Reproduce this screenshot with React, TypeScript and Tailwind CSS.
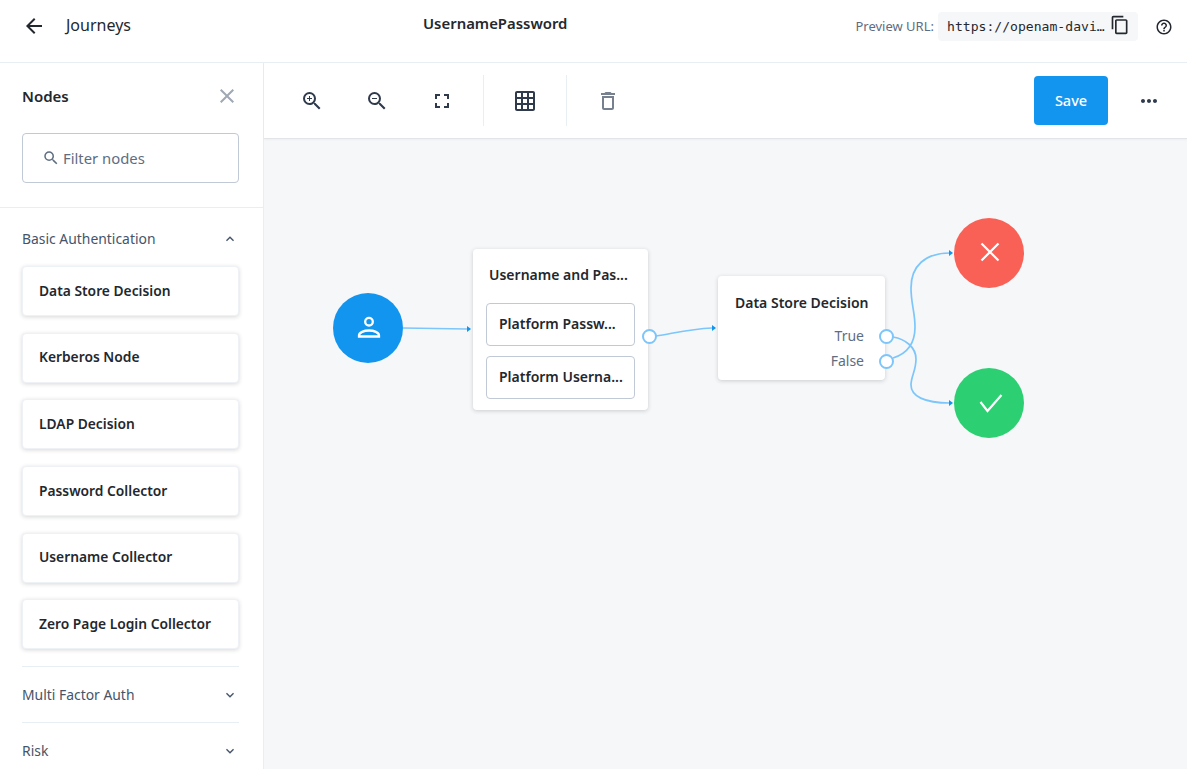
import * as React from "react";

const font = { fontFamily: '"Noto Sans", sans-serif' };

function Icon({ d, className }: { d: string; className?: string }) {
  return (
    <svg viewBox="0 0 24 24" fill="currentColor" className={className}>
      <path d={d} />
    </svg>
  );
}

const searchPath =
  "M15.5 14h-.79l-.28-.27A6.471 6.471 0 0 0 16 9.5 6.5 6.5 0 1 0 9.5 16c1.61 0 3.09-.59 4.23-1.57l.27.28v.79l5 4.99L20.49 19l-4.99-5zm-6 0C7.01 14 5 11.99 5 9.5S7.01 5 9.5 5 14 7.01 14 9.5 11.99 14 9.5 14z";
const paths = {
  back: "M20 11H7.83l5.59-5.59L12 4l-8 8 8 8 1.41-1.41L7.83 13H20v-2z",
  close: "M19 6.41L17.59 5 12 10.59 6.41 5 5 6.41 10.59 12 5 17.59 6.41 19 12 13.41 17.59 19 19 17.59 13.41 12z",
  search: searchPath,
  zoomIn: searchPath + "M12 10h-2v2H9v-2H7V9h2V7h1v2h2v1z",
  zoomOut: searchPath + "M7 9h5v1H7z",
  fullscreen: "M7 14H5v5h5v-2H7v-3zm-2-4h2V7h3V5H5v5zm12 7h-3v2h5v-5h-2v3zM14 5v2h3v3h2V5h-5z",
  grid: "M20 2H4c-1.1 0-2 .9-2 2v16c0 1.1.9 2 2 2h16c1.1 0 2-.9 2-2V4c0-1.1-.9-2-2-2zM8 20H4v-4h4v4zm0-6H4v-4h4v4zm0-6H4V4h4v4zm6 12h-4v-4h4v4zm0-6h-4v-4h4v4zm0-6h-4V4h4v4zm6 12h-4v-4h4v4zm0-6h-4v-4h4v4zm0-6h-4V4h4v4z",
  trash: "M6 19c0 1.1.9 2 2 2h8c1.1 0 2-.9 2-2V7H6v12zM8 9h8v10H8V9zm7.5-5l-1-1h-5l-1 1H5v2h14V4z",
  copy: "M16 1H4c-1.1 0-2 .9-2 2v14h2V3h12V1zm3 4H8c-1.1 0-2 .9-2 2v14c0 1.1.9 2 2 2h11c1.1 0 2-.9 2-2V7c0-1.1-.9-2-2-2zm0 16H8V7h11v14z",
  help: "M11 18h2v-2h-2v2zm1-16C6.48 2 2 6.48 2 12s4.48 10 10 10 10-4.48 10-10S17.52 2 12 2zm0 18c-4.41 0-8-3.59-8-8s3.59-8 8-8 8 3.59 8 8-3.59 8-8 8zm0-14c-2.21 0-4 1.79-4 4h2c0-1.1.9-2 2-2s2 .9 2 2c0 2-3 1.75-3 5h2c0-2.25 3-2.5 3-5 0-2.21-1.79-4-4-4z",
  more: "M6 10c-1.1 0-2 .9-2 2s.9 2 2 2 2-.9 2-2-.9-2-2-2zm12 0c-1.1 0-2 .9-2 2s.9 2 2 2 2-.9 2-2-.9-2-2-2zm-6 0c-1.1 0-2 .9-2 2s.9 2 2 2 2-.9 2-2-.9-2-2-2z",
  less: "M12 8l-6 6 1.41 1.41L12 10.83l4.59 4.58L18 14z",
  expand: "M16.59 8.59L12 13.17 7.41 8.59 6 10l6 6 6-6z",
};

const nodes = [
  "Data Store Decision",
  "Kerberos Node",
  "LDAP Decision",
  "Password Collector",
  "Username Collector",
  "Zero Page Login Collector",
];

function Sidebar() {
  return (
    <aside className="w-[264px] shrink-0 border-r border-[#e7eef4] bg-white flex flex-col overflow-hidden">
      <div className="shrink-0 flex items-center justify-between pl-[22px] pr-[24px] h-[70px]">
        <h2 className="text-[15px] font-semibold text-[#23282e] -mt-[3px]">Nodes</h2>
        <Icon d={paths.close} className="w-6 h-6 text-[#a0a8b4] -mt-[5px]" />
      </div>
      <div className="shrink-0 pl-[22px] pr-[24px] pb-[24px] border-b border-[#e7eef4]">
        <div className="h-[50px] rounded border border-[#c0c9d5] flex items-center pl-[19px] gap-[3px]">
          <Icon d={paths.search} className="w-[18px] h-[18px] text-[#5e6d82]" />
          <span className="text-[14.85px] text-[#5e6d82]">Filter nodes</span>
        </div>
      </div>
      <div className="shrink-0 pl-[22px] pr-[24px]">
        <div className="h-[58px] pt-[4px] flex items-center justify-between">
          <span className="text-[13.9px] text-[#455469]">Basic Authentication</span>
          <Icon d={paths.less} className="w-4 h-4 text-[#455469] mr-px" />
        </div>
        <div className="flex flex-col gap-[16.7px] pb-[17px] border-b border-[#e7eef4]">
          {nodes.map((n) => (
            <div
              key={n}
              className="h-[50px] shrink-0 rounded bg-white border border-[#eef1f5] shadow-[0_1px_4px_rgba(35,40,46,0.18)] flex items-center pl-[16px] text-[13.8px] font-semibold text-[#23282e]"
            >
              {n}
            </div>
          ))}
        </div>
        <div className="h-[56px] flex items-center justify-between border-b border-[#e7eef4]">
          <span className="text-[13.9px] text-[#455469]">Multi Factor Auth</span>
          <Icon d={paths.expand} className="w-4 h-4 text-[#455469] mr-px" />
        </div>
        <div className="h-[56px] flex items-center justify-between">
          <span className="text-[13.9px] text-[#455469]">Risk</span>
          <Icon d={paths.expand} className="w-4 h-4 text-[#455469] mr-px" />
        </div>
      </div>
    </aside>
  );
}

function Toolbar() {
  return (
    <div className="h-[76px] shrink-0 bg-white border-b border-[#e2e4e7] shadow-[0_1px_2px_rgba(0,0,0,0.04)] flex items-center relative z-10">
      <div className="flex items-center pl-[36px] gap-[41px] text-[#2f3a4d]">
        <Icon d={paths.zoomIn} className="w-6 h-6" />
        <Icon d={paths.zoomOut} className="w-6 h-6" />
        <Icon d={paths.fullscreen} className="w-6 h-6" />
      </div>
      <div className="w-px h-[51px] bg-[#e7eef4] ml-[29px]" />
      <Icon d={paths.grid} className="w-6 h-6 text-[#2f3a4d] ml-[29px]" />
      <div className="w-px h-[51px] bg-[#e7eef4] ml-[29px]" />
      <Icon d={paths.trash} className="w-6 h-6 text-[#76808e] ml-[29px]" />
      <button className="ml-auto w-[74px] h-[49px] rounded bg-[#1295ef] text-white text-[14.5px] font-medium">
        Save
      </button>
      <Icon d={paths.more} className="w-6 h-6 text-[#2f3a4d] ml-[29px] mr-[26px]" />
    </div>
  );
}

function Port({ className }: { className: string }) {
  return (
    <div className={"absolute w-[15px] h-[15px] rounded-full bg-white border-2 border-[#7cc6fb] " + className} />
  );
}

function Canvas() {
  return (
    <div className="relative flex-1 bg-[#f6f7f9] overflow-hidden">
      {/* connectors, in page coordinates */}
      <svg viewBox="264 139 923 630" className="absolute inset-0 w-[923px] h-[630px]" fill="none">
        <g stroke="#7cc6fb" strokeWidth="1.7">
          <path d="M403 328 L467 329" />
          <path d="M656 336 C 675 333, 690 329, 712 328" />
          <path d="M893 337 C 905 339, 916 347, 916 359 C 916 371, 911 376, 911 385 C 911 396, 924 403, 950 403" />
          <path d="M893 358 C 906 354, 915 345, 915 327 C 915 312, 911 304, 911 288 C 911 266, 925 253, 950 253" />
        </g>
        <g fill="#1295ef">
          <path d="M467 326 L471 329 L467 332z" />
          <path d="M712 325 L716 328 L712 331z" />
          <path d="M949 250 L953 253 L949 256z" />
          <path d="M949 400 L953 403 L949 406z" />
        </g>
      </svg>

      <div className="absolute left-[69px] top-[154px] w-[70px] h-[70px] rounded-full bg-[#1295ef] flex items-center justify-center">
        <svg viewBox="0 0 28 28" fill="none" stroke="white" strokeWidth="2.3" className="w-[28px] h-[28px] ml-[2px]">
          <circle cx="14" cy="7.7" r="3.8" />
          <path d="M4 22.5 v-1 c0-3 5-5 10-5 s10 2 10 5 v1 z" />
        </svg>
      </div>

      <div className="absolute left-[209px] top-[110px] w-[175px] h-[161px] rounded bg-white shadow-[0_1px_4px_rgba(35,40,46,0.2)] px-[13px]">
        <div className="h-[54px] flex items-center pl-[3px] pb-[4px] text-[14px] font-semibold text-[#23282e]">Username and Pas...</div>
        <div className="flex flex-col gap-[10px]">
          <div className="h-[43px] rounded border border-[#c0c9d5] flex items-center pl-[12px] pb-[2px] text-[14px] font-semibold text-[#23282e]">Platform Passw...</div>
          <div className="h-[43px] rounded border border-[#c0c9d5] flex items-center pl-[12px] pb-[2px] text-[14px] font-semibold text-[#23282e]">Platform Userna...</div>
        </div>
        <Port className="left-[169px] top-[80px]" />
      </div>

      <div className="absolute left-[454px] top-[137px] w-[167px] h-[104px] rounded bg-white shadow-[0_1px_4px_rgba(35,40,46,0.2)]">
        <div className="h-[54px] flex items-center pl-[17px] pb-[2px] text-[14px] font-semibold text-[#23282e]">Data Store Decision</div>
        <div className="flex flex-col items-end pr-[21px] text-[14px] text-[#5e6d82] leading-[25px] -mt-[7px]">
          <span>True</span>
          <span>False</span>
        </div>
        <Port className="left-[161px] top-[53px]" />
        <Port className="left-[161px] top-[78px]" />
      </div>

      <div className="absolute left-[690px] top-[79px] w-[70px] h-[70px] rounded-full bg-[#f96157] flex items-center justify-center">
        <svg viewBox="0 0 28 28" fill="none" stroke="white" strokeWidth="2.2" className="w-[28px] h-[28px] ml-[2px] -mt-[2px]">
          <path d="M5.5 5.5 L22.5 22.5 M22.5 5.5 L5.5 22.5" />
        </svg>
      </div>
      <div className="absolute left-[690px] top-[229px] w-[70px] h-[70px] rounded-full bg-[#2ccf72] flex items-center justify-center">
        <svg viewBox="0 0 28 28" fill="none" stroke="white" strokeWidth="2.2" className="w-[28px] h-[28px] ml-[3px]">
          <path d="M3.5 13 L10.5 22 L24.5 6" />
        </svg>
      </div>
    </div>
  );
}

export default function App() {
  return (
    <div className="w-[1187px] h-[769px] flex flex-col overflow-hidden bg-white" style={font}>
      <header className="h-[63px] shrink-0 border-b border-[#e7eef4] flex items-center relative">
        <Icon d={paths.back} className="w-6 h-6 text-[#23282e] ml-[22px] -mt-[10px]" />
        <span className="ml-[20px] text-[16px] text-[#23282e] -mt-[13px]">Journeys</span>
        <span className="absolute left-[423px] top-[12px] text-[14.9px] font-semibold text-[#23282e]">UsernamePassword</span>
        <div className="ml-auto flex items-center -mt-[9px]">
          <span className="text-[13px] text-[#5e6d82]">Preview URL:</span>
          <div className="ml-[4px] w-[200px] h-[29px] rounded bg-[#f6f7f9] flex items-center justify-between pl-[9px] pr-[8px] text-[#23282e]">
            <span className="text-[13.1px] whitespace-nowrap" style={{ fontFamily: '"DejaVu Sans Mono", monospace' }}>https://openam-davi…</span>
            <Icon d={paths.copy} className="w-[20px] h-[20px] -mt-[3px]" />
          </div>
          <Icon d={paths.help} className="w-[18px] h-[18px] text-[#23282e] ml-[17px] mr-[14px]" />
        </div>
      </header>
      <div className="flex-1 flex min-h-0">
        <Sidebar />
        <div className="flex-1 flex flex-col min-w-0">
          <Toolbar />
          <Canvas />
        </div>
      </div>
    </div>
  );
}
